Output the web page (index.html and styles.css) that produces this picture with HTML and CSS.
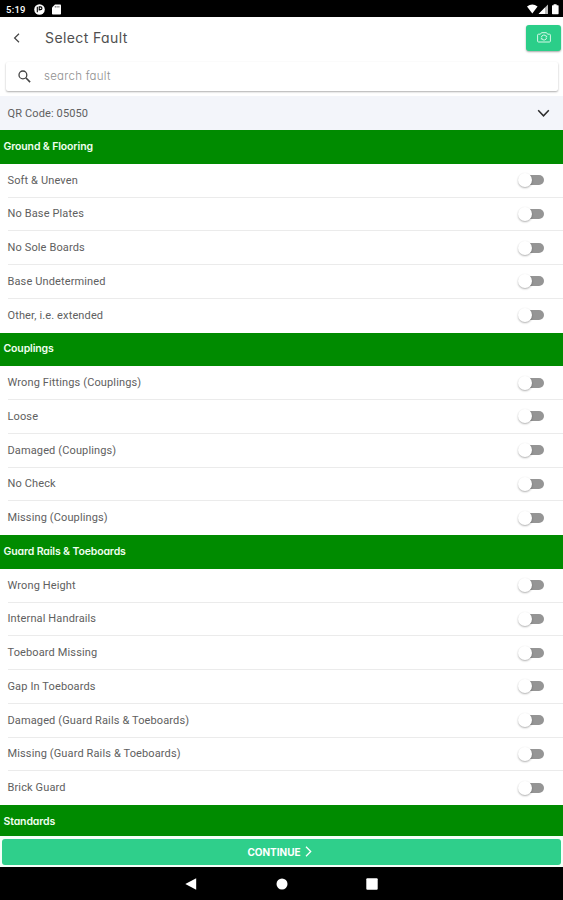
FILE: index.html
```html
<!DOCTYPE html>
<html lang="en">
<head>
<meta charset="utf-8">
<title>Select Fault</title>
<link rel="stylesheet" href="styles.css">
</head>
<body>
<div class="screen">
  <div class="status">
    <span class="clock">5:19</span>
    <svg class="st-app" width="11" height="11" viewBox="0 0 11 11"><circle cx="5.5" cy="5.5" r="5.3" fill="#fff"/><path d="M3.3 2.8v5.4M5.2 6.4V2.9h1.4a1.3 1.3 0 0 1 0 2.7H5.2" fill="none" stroke="#000" stroke-width="1.1"/></svg>
    <svg class="st-sd" width="9" height="11" viewBox="0 0 9 11"><path d="M3 .5h5.2q.8 0 .8.8v8.4q0 .8-.8.8H.8q-.8 0-.8-.8V3.6z" fill="#fff"/><path d="M3.3 2v1.6M5.1 2v1.6M6.9 2v1.6" stroke="#333" stroke-width=".7"/></svg>
    <svg class="st-right" width="33" height="11" viewBox="0 0 33 11"><path d="M0 2.4Q5.3-1.6 10.6 2.4L5.3 9.4z" fill="#fff"/><path d="M21 .4V10H11.6z" fill="#bbb"/><path d="M18 3.5V10h-6.4z" fill="#fff"/><path d="M26.6.2h3v1h1.4q.6 0 .6.6v7.8q0 .6-.6.6h-5.4q-.6 0-.6-.6V1.8q0-.6.6-.6h1z" fill="#fff"/></svg>
  </div>
  <header class="bar">
    <svg class="back" width="8" height="10" viewBox="0 0 8 10"><path d="M6 .8 1.6 5 6 9.2" fill="none" stroke="#444" stroke-width="1.2"/></svg>
    <h1 class="title">Select Fault</h1>
    <button class="cam" aria-label="Camera"><svg width="14" height="11" viewBox="0 0 14 11" fill="none" stroke="#d8f8e8" stroke-width="1"><path d="M1.5 2.2h1.9L4.5.7h5l1.1 1.5h1.9q.9 0 .9.9v6q0 .9-.9.9h-11q-.9 0-.9-.9v-6q0-.9.9-.9z"/><path d="M4.300 5.300a2.800 2.800 0 0 1 5.200-.8M9.700 5.700a2.800 2.800 0 0 1-5.200.9"/><path d="m8.400 4.900 1.300.1V3.600M5.600 6.300l-1.300-.1v1.400" stroke-width=".8"/></svg></button>
  </header>
  <div class="search">
    <svg width="13" height="13" viewBox="0 0 13 13" fill="none" stroke="#444"><circle cx="4.900" cy="4.900" r="3.900" stroke-width="1.300"/><path d="m7.800 7.800 4.300 4.300" stroke-width="1.600"/></svg>
    <span class="hint">search fault</span>
  </div>
  <div class="qr">
    <span class="label">QR Code: 05050</span>
    <svg width="13" height="9" viewBox="0 0 13 9"><path d="M1.200 1.300 6.500 6.800 11.800 1.300" fill="none" stroke="#2b2b2b" stroke-width="1.500"/></svg>
  </div>
  <main class="list">
    <h2 class="group">Ground &amp; Flooring</h2>
    <div class="row"><span class="label">Soft &amp; Uneven</span><i class="switch"></i></div>
    <div class="row"><span class="label">No Base Plates</span><i class="switch"></i></div>
    <div class="row"><span class="label">No Sole Boards</span><i class="switch"></i></div>
    <div class="row"><span class="label">Base Undetermined</span><i class="switch"></i></div>
    <div class="row"><span class="label">Other, i.e. extended</span><i class="switch"></i></div>
    <h2 class="group">Couplings</h2>
    <div class="row"><span class="label">Wrong Fittings (Couplings)</span><i class="switch"></i></div>
    <div class="row"><span class="label">Loose</span><i class="switch"></i></div>
    <div class="row"><span class="label">Damaged (Couplings)</span><i class="switch"></i></div>
    <div class="row"><span class="label">No Check</span><i class="switch"></i></div>
    <div class="row"><span class="label">Missing (Couplings)</span><i class="switch"></i></div>
    <h2 class="group">Guard Rails &amp; Toeboards</h2>
    <div class="row"><span class="label">Wrong Height</span><i class="switch"></i></div>
    <div class="row"><span class="label">Internal Handrails</span><i class="switch"></i></div>
    <div class="row"><span class="label">Toeboard Missing</span><i class="switch"></i></div>
    <div class="row"><span class="label">Gap In Toeboards</span><i class="switch"></i></div>
    <div class="row"><span class="label">Damaged (Guard Rails &amp; Toeboards)</span><i class="switch"></i></div>
    <div class="row"><span class="label">Missing (Guard Rails &amp; Toeboards)</span><i class="switch"></i></div>
    <div class="row"><span class="label">Brick Guard</span><i class="switch"></i></div>
    <h2 class="group">Standards</h2>
  </main>
  <div class="foot">
    <button class="continue"><span>CONTINUE</span><svg width="7" height="11" viewBox="0 0 7 11"><path d="M1 .8 5.700 5.500 1 10.200" fill="none" stroke="#fff" stroke-width="1.300"/></svg></button>
  </div>
  <nav class="nav">
    <svg width="12" height="12" viewBox="0 0 12 12"><path d="M11.200.2v11.600L.3 6z" fill="#fff"/></svg>
    <svg width="12" height="12" viewBox="0 0 12 12"><circle cx="6" cy="6" r="5.500" fill="#fff"/></svg>
    <svg width="12" height="12" viewBox="0 0 12 12"><rect x=".3" y=".3" width="11.400" height="11.400" rx="1" fill="#fff"/></svg>
  </nav>
</div>
</body>
</html>
```
FILE: styles.css
```css
* { box-sizing: border-box; }
body { margin: 0; background: #fff; font-family: Roboto, "Liberation Sans", sans-serif; }
svg { display: block; flex: none; }
button { border: 0; padding: 0; font: inherit; }

.screen { width: 563px; height: 900px; display: flex; flex-direction: column; overflow: hidden; }
.screen > * { flex: none; }

.status { height: 16.5px; background: #000; display: flex; align-items: center; padding: 2px 4px 0 6px; }
.clock { width: 27.5px; color: #fff; font-size: 9.5px; font-weight: 500; letter-spacing: .25px; }
.st-sd { margin-left: 7px; }
.st-right { margin-left: auto; margin-right: -1px; }

.bar { height: 43.5px; display: flex; align-items: center; padding: 0 2px 0 13px; }
.back { margin-top: -1px; }
.title {
  margin: -2px 0 0 24px; flex: 1; color: #505050;
  font: 400 14px Inter, sans-serif; font-feature-settings: "cv11"; letter-spacing: .4px;
}
.cam {
  width: 35px; height: 26px; margin-top: -1px; border-radius: 3px; background: #2bce89;
  display: flex; align-items: center; justify-content: center; box-shadow: 0 1px 2px rgba(0, 0, 0, .35);
}

.search {
  height: 29px; margin: 2px 5px 5px 6px; padding-left: 12px; border-radius: 2px; background: #fff;
  display: flex; align-items: center; box-shadow: 0 1px 2px rgba(0, 0, 0, .32);
}
.hint {
  margin: -1px 0 0 13px; color: #909090;
  font: 300 11.5px Inter, sans-serif; font-feature-settings: "cv11"; letter-spacing: .25px;
}

.qr { height: 34px; padding: 0 13px 0 7.5px; background: #f3f5fa; display: flex; align-items: center; justify-content: space-between; }
.label { color: #606060; font-size: 11px; letter-spacing: .13px; white-space: nowrap; }

.list { height: 706px; overflow: hidden; }
.group {
  height: 33.75px; margin: 0; padding: 0 0 1.5px 3.5px; background: #008b00; color: #f0fff0;
  display: flex; align-items: center;
  font: 600 10.5px Inter, sans-serif; font-feature-settings: "cv11"; letter-spacing: -.13px;
}
.row {
  height: 33.75px; margin-left: 7.5px; padding-right: 19px; border-bottom: 1px solid #ebebeb;
  display: flex; align-items: center; justify-content: space-between;
}
.row:has(+ .group) { border-bottom-color: transparent; }

.switch { position: relative; width: 20px; height: 10px; border-radius: 5px; background: #959595; }
.switch::before {
  content: ""; position: absolute; left: -6px; top: -2px; width: 14px; height: 14px; border-radius: 50%;
  background: #fff; box-shadow: 0 1px 2px rgba(0, 0, 0, .32);
}

.foot { height: 31px; padding: 3px 2px 2.5px; background: #f4fff8; }
.continue {
  width: 100%; height: 25.5px; padding-right: 4px; border-radius: 3px; background: #2fcf8b; color: #fff;
  display: flex; align-items: center; justify-content: center; gap: 4px;
  font: 700 10px Inter, sans-serif; letter-spacing: 0;
}
.nav { height: 33px; background: #000; display: flex; align-items: center; justify-content: center; gap: 78.5px; }
```
